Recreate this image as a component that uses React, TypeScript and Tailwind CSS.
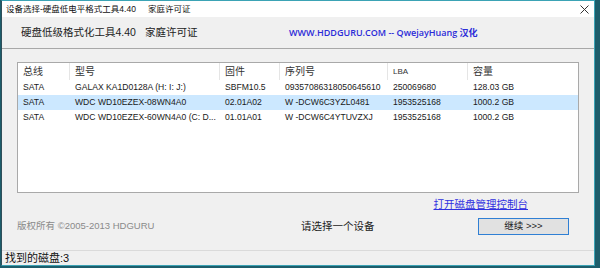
import React from "react";

const cjk = { fontFamily: '"Liberation Sans", "Noto Sans CJK SC", sans-serif' };

const cols = [
  { w: "w-[51px]", h: "总线" },
  { w: "w-[150px]", h: "型号" },
  { w: "w-[60px]", h: "固件" },
  { w: "w-[108px]", h: "序列号" },
  { w: "w-[80px]", h: "LBA" },
  { w: "flex-1", h: "容量" },
];

const rows = [
  ["SATA", "GALAX KA1D0128A (H: I: J:)", "SBFM10.5", "09357086318050645610", "250069680", "128.03 GB"],
  ["SATA", "WDC WD10EZEX-08WN4A0", "02.01A02", "W -DCW6C3YZL0481", "1953525168", "1000.2 GB"],
  ["SATA", "WDC WD10EZEX-60WN4A0 (C: D...", "01.01A01", "W -DCW6C4YTUVZXJ", "1953525168", "1000.2 GB"],
];

export default function App() {
  return (
    <div className="w-[600px] h-[268px] bg-[#1d5d6b] overflow-hidden" style={cjk}>
      <div className="ml-[1px] w-[594px] h-[266px] border border-[#3ba3b5] border-l-[#2f4f5a] bg-[#f0f0f0] flex flex-col">
        {/* title bar */}
        <div className="h-[16px] bg-white flex items-center justify-between pl-[4px] pr-[5px] shrink-0">
          <div className="text-[8.5px] text-[#111] leading-none flex gap-[12px]">
            <span>设备选择-硬盘低电平格式工具4.40</span>
            <span>家庭许可证</span>
          </div>
          <svg width="9" height="9" viewBox="0 0 9 9">
            <path d="M0.5 0.5 L8.5 8.5 M8.5 0.5 L0.5 8.5" stroke="#333" strokeWidth="1" />
          </svg>
        </div>
        {/* header */}
        <div className="h-[32px] shrink-0 border-b border-[#a8a8a8] flex items-center pl-[19px]">
          <div className="w-[268px] text-[10.5px] text-[#222] flex gap-[9px]">
            <span>硬盘低级格式化工具4.40</span>
            <span>家庭许可证</span>
          </div>
          <div className="text-[9px] font-semibold text-[#2b2bd8]" style={{ fontFamily: '"Open Sans", "Noto Sans CJK SC", sans-serif' }}>
            WWW.HDDGURU.COM -- QwejayHuang 汉化
          </div>
        </div>
        {/* body */}
        <div className="flex-1 flex flex-col px-[15px] pt-[13px]">
          <div className="h-[131px] bg-white border border-[#a9a9a9] flex flex-col">
            <div className="h-[17px] flex items-center">
              {cols.map((c, i) => (
                <div
                  key={i}
                  className={`${c.w} h-full flex items-center pl-[5px] ${i > 0 ? "border-l border-[#e5e5e5]" : ""} ${
                    c.h === "LBA" ? "text-[8px]" : "text-[10px]"
                  } text-[#333]`}
                >
                  {c.h}
                </div>
              ))}
            </div>
            {rows.map((r, ri) => (
              <div key={ri} className={`h-[15px] flex items-center ${ri === 1 ? "bg-[#cce8ff]" : ""}`}>
                {r.map((t, ci) => (
                  <div
                    key={ci}
                    className={`${cols[ci].w} ${ci > 0 ? "pl-[6px]" : "pl-[5px]"} text-[8.6px] text-[#1a1a1a] whitespace-nowrap overflow-hidden`}
                  >
                    {t}
                  </div>
                ))}
              </div>
            ))}
          </div>
          <div className="h-[24px] flex items-center justify-end pr-[51px]">
            <span className="text-[10.5px] text-[#3030e0] underline">打开磁盘管理控制台</span>
          </div>
          <div className="h-[19px] flex items-center">
            <span className="w-[284px] text-[9.5px] text-[#8a8a8a]">版权所有 ©2005-2013 HDGURU</span>
            <span className="w-[177px] text-[10.5px] text-[#222]">请选择一个设备</span>
            <div className="w-[91px] h-[17px] border-[1.5px] border-[#2f7fd4] bg-[#e1e1e1] flex items-center justify-center text-[9.5px] text-[#222]">
              继续 &gt;&gt;&gt;
            </div>
          </div>
        </div>
        {/* status */}
        <div className="h-[15px] shrink-0 border-t border-[#dadada] flex items-center pl-[3px]">
          <span className="text-[11px] text-[#111]">找到的磁盘:3</span>
        </div>
      </div>
    </div>
  );
}
